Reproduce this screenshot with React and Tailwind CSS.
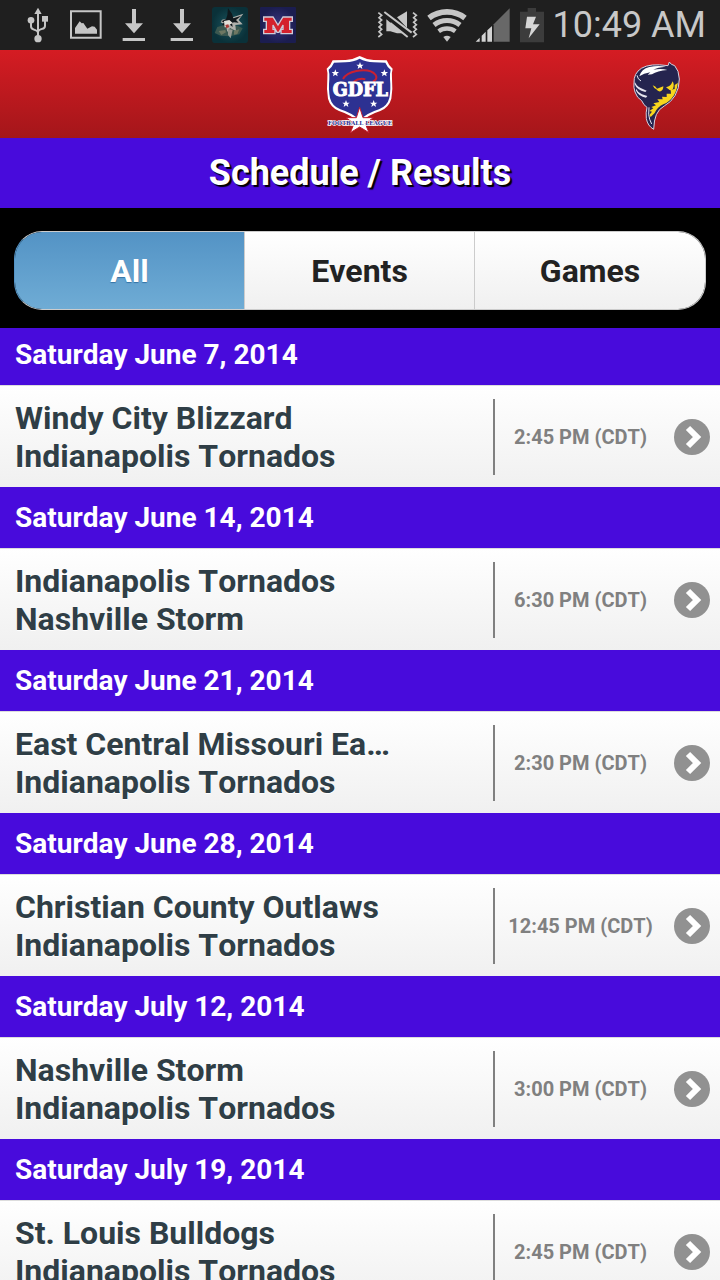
import { useState } from "react";

const FILTROS = ["All", "Events", "Games"];

const JOGOS = [
  { data: "Saturday June 7, 2014", times: ["Windy City Blizzard", "Indianapolis Tornados"], hora: "2:45 PM (CDT)" },
  { data: "Saturday June 14, 2014", times: ["Indianapolis Tornados", "Nashville Storm"], hora: "6:30 PM (CDT)" },
  { data: "Saturday June 21, 2014", times: ["East Central Missouri Ea…", "Indianapolis Tornados"], hora: "2:30 PM (CDT)" },
  { data: "Saturday June 28, 2014", times: ["Christian County Outlaws", "Indianapolis Tornados"], hora: "12:45 PM (CDT)" },
  { data: "Saturday July 12, 2014", times: ["Nashville Storm", "Indianapolis Tornados"], hora: "3:00 PM (CDT)" },
  { data: "Saturday July 19, 2014", times: ["St. Louis Bulldogs", "Indianapolis Tornados"], hora: "2:45 PM (CDT)" }
];

// =========================
// STATUS BAR ICONS
// =========================

function UsbIcon() {
  return (
    <svg width="22" height="36" viewBox="82 24 66 108" fill="#c6c6c6" aria-hidden="true">
      <path d="M115 26l11 19h-22z" />
      <path
        d="M115 40v74M94 66v16q0 7 7 9l8 3q6 2 6 8M136 62v18q0 7-7 9l-8 3q-6 2-6 8"
        fill="none"
        stroke="#c6c6c6"
        strokeWidth="6"
      />
      <circle cx="94" cy="64" r="10" />
      <path d="M127 51h18v17h-18z" />
      <circle cx="115" cy="119" r="11" />
    </svg>
  );
}

function ImageIcon() {
  return (
    <svg width="32" height="30" viewBox="209 34 96 90" aria-hidden="true">
      <path d="M212 38h89v79h-89z" fill="none" stroke="#c6c6c6" strokeWidth="6" />
      <path d="M224 105V88l14-20 6 6 5-1 12 17 14-7 8 1 7 9v12z" fill="#c6c6c6" />
    </svg>
  );
}

function DownloadIcon() {
  return (
    <svg width="24" height="34" viewBox="366 27 72 102" fill="#c6c6c6" aria-hidden="true">
      <path d="M396 30h12v43h21l-27 30-27-30h21zM368 117h67v9h-67z" />
    </svg>
  );
}

function SharkIcon() {
  return (
    <svg width="36" height="36" viewBox="0 0 108 108" aria-hidden="true">
      <defs>
        <radialGradient id="teal">
          <stop offset="0" stopColor="#1a5660" />
          <stop offset="1" stopColor="#0a3139" />
        </radialGradient>
      </defs>
      <rect width="108" height="108" rx="10" fill="url(#teal)" />
      <path d="M8 78l8-18 20-6 40 2 16 8-10 18-28 6-28-2z" fill="#3b5850" />
      <path d="M30 38l24-4 40-14-14 19 12 13-22 2 2 18-18-9-8 12-4-21-16-8z" fill="#b0b1ac" />
      <path d="M48 4l12 16 4 14 24-8-16 13 8 8-14-1-6 2 2 12-10-8-10 4-12-2 6-8-8-3 14-7 4-12z" fill="#10181c" />
      <path d="M36 42l16-3 10 9-9 5-5 8-10 0z" fill="#e2e0da" />
      <path d="M40 54l9-2 3 8-9 4z" fill="#a93a36" />
      <path d="M48 66l14 2-6 26-8-10z" fill="#979a92" />
      <path d="M20 72l20-3 2 7-14 8zM66 71l16-4-6 14-10 2z" fill="#6d7762" />
    </svg>
  );
}

function LetterMIcon() {
  return (
    <svg width="36" height="36" viewBox="0 0 108 108" aria-hidden="true">
      <defs>
        <radialGradient id="navy">
          <stop offset="0" stopColor="#3a3580" />
          <stop offset="1" stopColor="#1b1d50" />
        </radialGradient>
      </defs>
      <rect width="108" height="108" rx="4" fill="url(#navy)" />
      <path
        d="M11 30h28l15 24 15-24h28v13h-8v24h8v13H63V67h6V54L57 76h-6L39 54v13h6v13H11V67h8V43h-8z"
        fill="#d4212d"
        stroke="#cfcbd8"
        strokeWidth="4"
      />
    </svg>
  );
}

function MuteIcon() {
  return (
    <svg width="42" height="30" viewBox="48 34 126 90" aria-hidden="true">
      <path
        d="M52 42l10 8-8 7 8 7-8 7 8 7-8 7 8 7-8 7 8 8-10 8M156 42l10 8-8 7 8 7-8 7 8 7-8 7 8 7-8 7 8 8-10 8"
        fill="none"
        stroke="#c6c6c6"
        strokeWidth="5"
      />
      <path d="M76 62l50 42h-18l-20-6H76zM108 56l30-18v50z" fill="#c6c6c6" />
      <path d="M71 48l78 66" stroke="#1f1f1f" strokeWidth="6" />
      <path d="M70 40l82 62M88 73l52 42" stroke="#c6c6c6" strokeWidth="6" />
    </svg>
  );
}

function WifiIcon() {
  return (
    <svg width="40" height="34" viewBox="192 25 120 102" fill="none" stroke="#c6c6c6" aria-hidden="true">
      <path d="M198 55A89 89 0 0 1 306 55" strokeWidth="17" />
      <path d="M213 76A64 64 0 0 1 291 76" strokeWidth="15" />
      <path d="M227 95A41 41 0 0 1 277 95" strokeWidth="13" />
      <path d="M241 112q11-8 22 0l-11 14z" fill="#c6c6c6" stroke="none" />
    </svg>
  );
}

function SignalIcon() {
  return (
    <svg width="36" height="34" viewBox="340 31 108 102" aria-hidden="true">
      <path d="M396 132V80l48-48v100z" fill="#686868" />
      <path d="M342 132l12-12v12zM360 132v-18l12-12v30zM377 132V98l14-13v47z" fill="#d2d2d2" />
    </svg>
  );
}

function BatteryIcon() {
  return (
    <svg width="26" height="36" viewBox="471 26 78 108" aria-hidden="true">
      <path d="M474 40h23V29h25v11h24v92h-72z" fill="#3c3c3c" />
      <path d="M495 55h27l-9 23h20l-33 42 8-30h-18z" fill="#d6d6d6" />
    </svg>
  );
}

// =========================
// LOGOS
// =========================

const ESTRELA = "M0-11l3 8h8l-6 5 2 8-7-5-7 5 2-8-6-5h8z";

function LeagueLogo() {
  return (
    <svg width="68" height="78" viewBox="50 25 204 234" role="img" aria-label="GDFL Football League">
      <path
        d="M151 28q-18 10-42 12-22 0-39 1-5 14-18 25 4 12 2 30-3 32 2 60 7 26 33 37 38 12 62 36 24-24 62-36 26-11 33-37 5-28 2-60-2-18 2-30-13-11-18-25-17-1-39-1-24-2-42-12z"
        fill="#fff"
      />
      <path
        d="M151 36q-18 10-42 11-20 0-35 1-5 12-16 21 3 11 2 28-3 32 2 57 6 24 31 34 36 11 58 33 22-22 58-33 25-10 31-34 5-25 2-57-1-17 2-28-11-9-16-21-15-1-35-1-24-1-42-11z"
        fill="#2d3192"
      />
      <path d="M101 97q10-18 40-24 43-7 58 12 7 12-8 20M132 106q18-14 36-8" fill="none" stroke="#ca2031" strokeWidth="6" />
      <text x="153" y="147" textAnchor="middle" fontFamily="DejaVu Serif" fontWeight="bold" fontSize="53" fill="#fff" stroke="#fff" strokeWidth="3">
        GDFL
      </text>
      <g fill="#fff">
        <path d={ESTRELA} transform="translate(152 57)" />
        <path d={ESTRELA} transform="translate(78 79)" />
        <path d={ESTRELA} transform="translate(225 79)" />
        <path d={ESTRELA} transform="translate(110 171)" />
        <path d={ESTRELA} transform="translate(193 171)" />
      </g>
      <path
        d="M151 182l10 31h31l-24 18 11 27-28-17-28 17 11-27-24-18h31z"
        fill="#fff"
        stroke="#c3182b"
        strokeWidth="3"
      />
      <text x="152" y="234" textAnchor="middle" fontFamily="DejaVu Serif" fontWeight="bold" fontSize="17" fill="#2d3192" stroke="#fff" strokeWidth="4" paintOrder="stroke">
        FOOTBALL LEAGUE
      </text>
    </svg>
  );
}

function TeamLogo() {
  return (
    <svg width="47" height="72" viewBox="9 0 141 216" role="img" aria-label="Indianapolis Tornados">
      {/* funnel */}
      <path
        d="M118 12q4 8 16 11 13 14 14 40 0 28-13 50-12 20-31 30-18 10-25 27-7 16-8 44-18-10-22-32-2-18 2-34-10-6-16-20-14-8-20-26-5-14-3-28-1-28 22-43 26-16 80-8z"
        fill="#25244f"
        stroke="#d6d3e2"
        strokeWidth="3"
      />
      {/* wind streaks */}
      <path d="M28 55q6-22 30-28 26-6 50-1-26 2-38 9 24-5 42 1-30 2-46 13l-13 1 8-7q-20 3-33 12z" fill="#fff" />
      <path d="M14 70q4 14 18 20l18 8-4 4q-26-6-32-24zM18 92q6 12 18 17l16 5-4 5q-22-4-30-21z" fill="#e6e4ee" />
      <path d="M21 52q2 12 12 17M57 148q-3 24 2 36l6 14" fill="none" stroke="#e6e4ee" strokeWidth="3" />
      {/* face */}
      <path
        d="M144 66q0 26-13 47-12 18-31 26-18 8-26 26l-12 12-4-6 8-10-8-2 12-8-6-4 14-5-8-6 18-4-6-8 16 0-2-8 14 1 0-10 13 0-1-12 12-2 0-12 9-6z"
        fill="#f7d51d"
      />
      <path d="M68 82q9 2 13 10l19-7q0 12-8 15-8 2-13-6-8-4-11-12z" fill="#f7d51d" />
      <path d="M108 88q14-2 20-18 6 10 1 22-7 8-13 2z" fill="#f7d51d" />
    </svg>
  );
}

function ArrowBadge() {
  return (
    <svg width="36" height="36" viewBox="0 0 36 36" className="shrink-0" aria-hidden="true">
      <circle cx="18" cy="18" r="18" fill="#919191" />
      <path d="M14 9l9 9-9 9" fill="none" stroke="#fff" strokeWidth="6" />
    </svg>
  );
}

// =========================
// UI
// =========================

function StatusBar() {
  return (
    <div className="flex h-[50px] shrink-0 items-center justify-between bg-[#1f1f1f] pr-[14px] pl-[14px]">

      <div className="grid w-72 grid-cols-6 items-center justify-items-center">
        <UsbIcon />
        <ImageIcon />
        <DownloadIcon />
        <DownloadIcon />
        <SharkIcon />
        <LetterMIcon />
      </div>

      <div className="flex items-center gap-2">
        <MuteIcon />
        <WifiIcon />
        <SignalIcon />
        <BatteryIcon />
        <span className="text-[36px] leading-[50px] whitespace-nowrap text-[#c8c8c8]">10:49 AM</span>
      </div>

    </div>
  );
}

function GameRow({ jogo }) {
  return (
    <li className="group">

      <h2 className="bg-[#480bdc] px-[15px] py-3 text-[28px] leading-[37px] font-bold text-white group-first:pt-2">
        {jogo.data}
      </h2>

      <a
        href="#game"
        className="flex items-center border-t border-[#ddd] bg-linear-to-b from-white to-[#f0f0f0] pt-[13px] pr-[10px] pb-3 pl-[15px]"
      >
        <div className="min-w-0 flex-1 pr-[90px] text-[32px] leading-[38px] font-bold text-[#2f3e46] text-shadow-[0_1px_0_#fff]">
          {jogo.times.map(time => (
            <p key={time} className="truncate">{time}</p>
          ))}
        </div>

        <div className="flex h-[76px] w-[217px] shrink-0 items-center border-l-2 border-[#808080]">
          <span className="flex-1 pr-2 text-center text-[20px] font-bold whitespace-nowrap text-[#808080]">
            {jogo.hora}
          </span>
          <ArrowBadge />
        </div>
      </a>

    </li>
  );
}

export default function App() {

  const [filtro, setFiltro] = useState("All");

  return (
    <div className="flex h-screen flex-col overflow-hidden bg-black font-['Roboto',sans-serif] [font-kerning:none]">

      <StatusBar />

      {/* HEADER */}
      <header className="grid h-[88px] shrink-0 grid-cols-[1fr_auto_1fr] items-center bg-linear-to-b from-[#d51c23] to-[#a4161a] px-10">
        <div className="col-start-2">
          <LeagueLogo />
        </div>
        <div className="justify-self-end">
          <TeamLogo />
        </div>
      </header>

      <h1 className="shrink-0 bg-[#480bdc] text-center text-[36px] leading-[70px] font-bold text-white text-shadow-[2px_2px_1px_#000]">
        Schedule / Results
      </h1>

      {/* FILTRO */}
      <nav className="shrink-0 px-[14px] pt-[23px] pb-[18px]">
        <div className="grid grid-cols-3 overflow-hidden rounded-[28px] border border-[#ccc] has-[button:first-child[aria-pressed=true]]:border-l-[#5393c5]">
          {FILTROS.map(nome => (
            <button
              key={nome}
              type="button"
              aria-pressed={filtro === nome}
              onClick={() => setFiltro(nome)}
              className={`h-[77px] border-r border-[#ccc] text-[32px] font-bold last:border-r-0 ${
                filtro === nome
                  ? "bg-linear-to-b from-[#5393c5] to-[#6facd5] text-white text-shadow-[0_1px_1px_#3373a5]"
                  : "bg-linear-to-b from-white to-[#f0f0f0] text-[#222]"
              }`}
            >
              {nome}
            </button>
          ))}
        </div>
      </nav>

      {/* LISTA */}
      <ul className="min-h-0 flex-1 overflow-y-auto [scrollbar-width:none]">
        {JOGOS.map(jogo => (
          <GameRow key={jogo.data} jogo={jogo} />
        ))}
      </ul>

    </div>
  );
}
